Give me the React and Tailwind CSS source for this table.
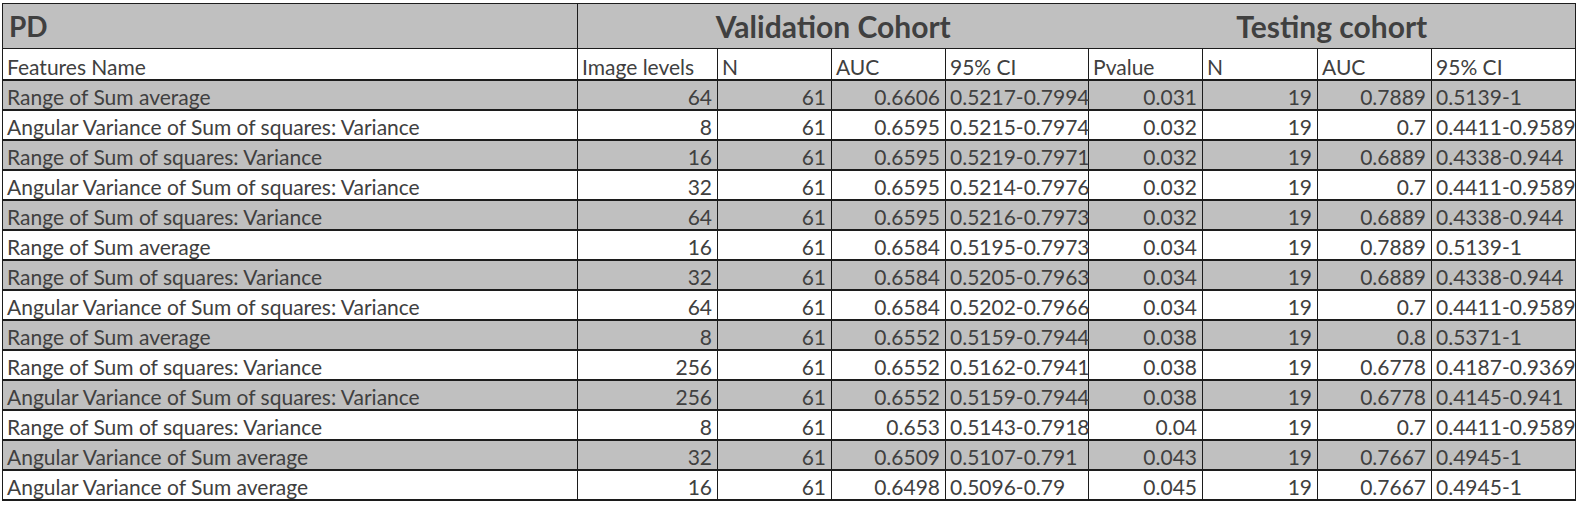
import React from "react";

const rows = [
  ["Range of Sum average", "64", "61", "0.6606", "0.5217-0.7994", "0.031", "19", "0.7889", "0.5139-1"],
  ["Angular Variance of Sum of squares: Variance", "8", "61", "0.6595", "0.5215-0.7974", "0.032", "19", "0.7", "0.4411-0.9589"],
  ["Range of Sum of squares: Variance", "16", "61", "0.6595", "0.5219-0.7971", "0.032", "19", "0.6889", "0.4338-0.944"],
  ["Angular Variance of Sum of squares: Variance", "32", "61", "0.6595", "0.5214-0.7976", "0.032", "19", "0.7", "0.4411-0.9589"],
  ["Range of Sum of squares: Variance", "64", "61", "0.6595", "0.5216-0.7973", "0.032", "19", "0.6889", "0.4338-0.944"],
  ["Range of Sum average", "16", "61", "0.6584", "0.5195-0.7973", "0.034", "19", "0.7889", "0.5139-1"],
  ["Range of Sum of squares: Variance", "32", "61", "0.6584", "0.5205-0.7963", "0.034", "19", "0.6889", "0.4338-0.944"],
  ["Angular Variance of Sum of squares: Variance", "64", "61", "0.6584", "0.5202-0.7966", "0.034", "19", "0.7", "0.4411-0.9589"],
  ["Range of Sum average", "8", "61", "0.6552", "0.5159-0.7944", "0.038", "19", "0.8", "0.5371-1"],
  ["Range of Sum of squares: Variance", "256", "61", "0.6552", "0.5162-0.7941", "0.038", "19", "0.6778", "0.4187-0.9369"],
  ["Angular Variance of Sum of squares: Variance", "256", "61", "0.6552", "0.5159-0.7944", "0.038", "19", "0.6778", "0.4145-0.941"],
  ["Range of Sum of squares: Variance", "8", "61", "0.653", "0.5143-0.7918", "0.04", "19", "0.7", "0.4411-0.9589"],
  ["Angular Variance of Sum average", "32", "61", "0.6509", "0.5107-0.791", "0.043", "19", "0.7667", "0.4945-1"],
  ["Angular Variance of Sum average", "16", "61", "0.6498", "0.5096-0.79", "0.045", "19", "0.7667", "0.4945-1"],
];

const headers = ["Features Name", "Image levels", "N", "AUC", "95% CI", "Pvalue", "N", "AUC", "95% CI"];
const widths = ["w-[575px]", "w-[140px]", "w-[114px]", "w-[114px]", "w-[143px]", "w-[114px]", "w-[115px]", "w-[114px]", "w-[144px]"];
// text columns sit left, numbers sit right (excel default)
const leftCols = [0, 4, 8];

const App = () => {
  return (
    <div className="min-h-screen bg-white pt-[3px] pl-[2px] font-['Lato','Liberation_Sans',sans-serif] text-[#404040]">
      <table className="table-fixed border-collapse border border-[#1c1c1c] w-[1573px]">
        <colgroup>
          {widths.map((w, i) => (
            <col key={i} className={w} />
          ))}
        </colgroup>
        <thead>
          <tr className="h-[45px] bg-[#c0c0c0]">
            <th className="border-r border-b border-[#1c1c1c] text-left align-middle pl-[6px] text-[28px] font-bold leading-none">
              PD
            </th>
            <th colSpan={4} className="border-b border-[#1c1c1c] text-center text-[30px] font-bold leading-none">
              Validation Cohort
            </th>
            <th colSpan={4} className="border-b border-[#1c1c1c] text-center text-[30px] font-bold leading-none">
              Testing cohort
            </th>
          </tr>
          <tr className="h-[31px] bg-white">
            {headers.map((h, i) => (
              <th
                key={i}
                className="border-x border-b-2 border-[#1c1c1c] text-left font-normal text-[21px] leading-none align-bottom pl-[4px] pr-[4px] pb-[2px]"
              >
                {h}
              </th>
            ))}
          </tr>
        </thead>
        <tbody>
          {rows.map((r, ri) => (
            <tr key={ri} className={ri % 2 === 0 ? "h-[30px] bg-[#c0c0c0]" : "h-[30px] bg-white"}>
              {r.map((c, ci) => (
                <td
                  key={ci}
                  className={
                    leftCols.includes(ci)
                      ? "border-x border-b-2 border-[#1c1c1c] text-left text-[21px] leading-none align-bottom pl-[4px] pr-[4px] pb-[2px] whitespace-nowrap"
                      : "border-x border-b-2 border-[#1c1c1c] text-right text-[21px] leading-none align-bottom pl-[4px] pr-[5px] pb-[2px] whitespace-nowrap"
                  }
                >
                  {c}
                </td>
              ))}
            </tr>
          ))}
        </tbody>
      </table>
    </div>
  );
};

export default App;
